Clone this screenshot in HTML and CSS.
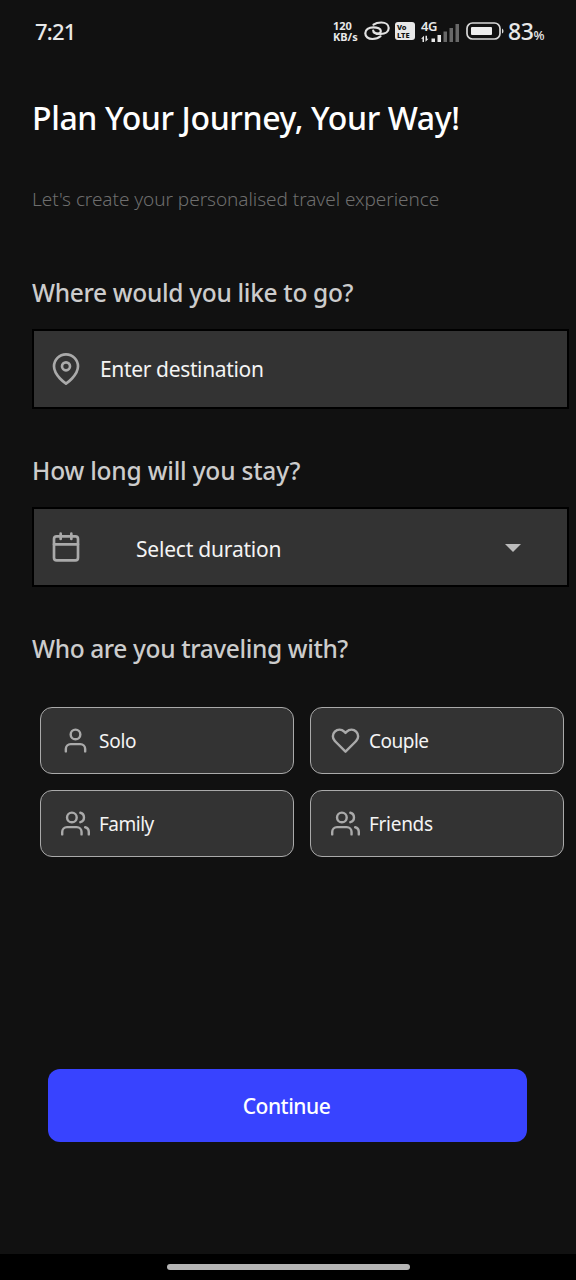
FILE: index.html
```html
<!DOCTYPE html>
<html lang="en">
<head>
<meta charset="utf-8">
<title>Plan Your Journey</title>
<link rel="stylesheet" href="styles.css">
</head>
<body>
<svg class="sprite" aria-hidden="true">
  <symbol id="users" viewBox="0 0 24 24"><path d="M17 21v-2a4 4 0 0 0-4-4H5a4 4 0 0 0-4 4v2"/><circle cx="9" cy="7" r="4"/><path d="M23 21v-2a4 4 0 0 0-3-3.87M16 3.13a4 4 0 0 1 0 7.75"/></symbol>
</svg>
<header class="status">
  <span class="clock">7:21</span>
  <div class="indicators">
    <div class="rate"><span>120</span><span class="unit">KB/s</span></div>
    <svg class="link" viewBox="0 0 26 20"><g fill="none" stroke="#e2e2e2" stroke-width="2.2" stroke-linecap="round"><path d="M16.500 15.300C14.500 17.200 11.500 18 8.500 18C4 18 1.300 15.500 1.300 12.300C1.300 8.700 4.800 6.300 9.300 6.300C13.500 6.300 16.800 7.800 16.800 10C16.800 11.800 15 12.800 12.500 12.800"/><path d="M9.500 3.700C11.500 2.200 14.500 1.500 17.300 1.500C21.700 1.500 24.700 3.800 24.700 7C24.700 10.700 21.200 13 16.700 13C12.500 13 9.200 11.600 9.200 9.500"/></g></svg>
    <div class="volte"><span>Vo</span><span>LTE</span></div>
    <div class="mobile">
      <svg class="bars" viewBox="0 0 38 19"><g fill="#686868"><path d="M22.500 8.500H26V19h-3.500zM28.500 5H32v14h-3.500zM34.500 1H38v18h-3.500z"/></g><g fill="#e8e8e8"><path d="M10.500 15.500H14V19h-3.500zM16.500 12H20v7h-3.500zM0 15.800l3-3V19H1.500v-3.200zM4.500 12.800H6v3h1.500l-3 3z"/></g></svg>
      <span class="gen">4G</span>
    </div>
    <svg class="battery" viewBox="0 0 38 18"><rect x="1" y="1" width="33" height="16" rx="5.500" fill="none" stroke="#d8d8d8" stroke-width="1.700"/><rect x="5" y="5" width="21" height="8" rx="1" fill="#eee"/><path d="M36 6.500q1.500.5 1.500 2.500T36 11.500z" fill="#d8d8d8"/></svg>
    <span class="charge">83<small>%</small></span>
  </div>
</header>
<main class="page">
  <h1 class="title">Plan Your Journey, Your Way!</h1>
  <p class="subtitle">Let's create your personalised travel experience</p>
  <h2 class="question where">Where would you like to go?</h2>
  <div class="field destination">
    <svg class="icon" viewBox="0 0 24 24"><path d="M21 10c0 7-9 13-9 13s-9-6-9-13a9 9 0 0 1 18 0z"/><circle cx="12" cy="10" r="3"/></svg>
    <span class="placeholder enter">Enter destination</span>
  </div>
  <h2 class="question stay">How long will you stay?</h2>
  <div class="field duration">
    <svg class="icon" viewBox="0 0 24 24"><rect x="3" y="4" width="18" height="18" rx="2"/><path d="M16 2v4M8 2v4M3 10h18"/></svg>
    <span class="placeholder select">Select duration</span>
    <svg class="caret" viewBox="0 0 16 8"><path d="M0 0h16L8 8z"/></svg>
  </div>
  <h2 class="question who">Who are you traveling with?</h2>
  <div class="options">
    <div class="option"><svg class="icon" viewBox="0 0 24 24"><path d="M20 21v-2a4 4 0 0 0-4-4H8a4 4 0 0 0-4 4v2"/><circle cx="12" cy="7" r="4"/></svg><span class="solo">Solo</span></div>
    <div class="option"><svg class="icon" viewBox="0 0 24 24"><path d="M20.840 4.610a5.500 5.500 0 0 0-7.780 0L12 5.670l-1.060-1.060a5.500 5.500 0 0 0-7.780 7.780l1.060 1.060L12 21.230l7.780-7.780 1.060-1.060a5.500 5.500 0 0 0 0-7.780z"/></svg><span class="couple">Couple</span></div>
    <div class="option"><svg class="icon"><use href="#users"/></svg><span class="family">Family</span></div>
    <div class="option"><svg class="icon"><use href="#users"/></svg><span class="friends">Friends</span></div>
  </div>
  <button class="continue">Continue</button>
</main>
<footer class="navbar"><div class="handle"></div></footer>
</body>
</html>
```
FILE: styles.css
```css
* { box-sizing: border-box; }
body {
  margin: 0;
  width: 576px;
  height: 1280px;
  display: flex;
  flex-direction: column;
  overflow: hidden;
  background: #111;
  color: #f4f4f4;
  font-family: "Noto Sans", "Open Sans", sans-serif;
  white-space: nowrap;
}
.sprite { position: absolute; width: 0; height: 0; }
.status {
  height: 62px;
  padding: 0 31px 0 35px;
  display: flex;
  align-items: center;
  justify-content: space-between;
}
.clock { font-size: 22px; font-weight: 500; color: #e8e8e8; letter-spacing: -0.8px; }
.indicators { display: flex; align-items: center; color: #e8e8e8; }
.rate {
  width: 28px;
  margin-right: 5px;
  padding-left: 2px;
  display: flex;
  flex-direction: column;
  font-size: 11px;
  line-height: 11px;
  font-weight: 700;
}
.link { width: 26px; height: 20px; margin-right: 5px; }
.volte {
  width: 20px;
  height: 18px;
  margin-right: 6px;
  padding: 1px 2px;
  border-radius: 3px;
  background: #e8e8e8;
  color: #111;
  display: flex;
  flex-direction: column;
  font-size: 7.5px;
  line-height: 8px;
  font-weight: 800;
}
.mobile { display: grid; width: 38px; height: 22px; margin-right: 7px; }
.mobile > * { grid-area: 1 / 1; }
.bars { width: 38px; height: 19px; align-self: end; }
.gen { font-size: 13px; line-height: 12px; font-weight: 600; letter-spacing: -0.5px; }
.battery { width: 38px; height: 18px; margin-right: 4px; }
.charge { width: 37px; margin-top: 3px; font-size: 23px; line-height: 28px; font-weight: 500; letter-spacing: -0.4px; }
.charge small { font-size: 13px; letter-spacing: 0; }

.page { height: 1192px; display: flex; flex-direction: column; padding: 32px 7px 0 32px; }
.title { margin: 0; font-size: 32px; line-height: 48px; font-weight: 500; color: #fff; letter-spacing: -0.38px; }
.subtitle { margin: 41px 0 0; font-size: 19px; line-height: 32px; font-weight: 300; color: #6e6e6e; letter-spacing: -0.05px; }
.question { margin: 0; font-size: 24.5px; line-height: 36px; font-weight: 500; color: #ccc; }
.where { margin-top: 60px; letter-spacing: -0.32px; }
.stay { margin-top: 44px; letter-spacing: -0.2px; }
.who { margin-top: 44px; letter-spacing: -0.38px; }
.field {
  flex: none;
  width: 537px;
  height: 80px;
  margin-top: 18px;
  border: 2px solid #000;
  background: #333;
  display: flex;
  align-items: center;
  padding-left: 16px;
}
.icon { fill: none; stroke: #aaa; stroke-width: 2; stroke-linecap: round; stroke-linejoin: round; }
.field .icon { width: 32px; height: 32px; }
.placeholder { font-size: 21px; line-height: 30px; color: #f4f4f4; }
.enter { margin-left: 18px; letter-spacing: -0.35px; }
.select { margin: 3px 0 0 54px; letter-spacing: -0.2px; }
.caret { width: 16px; height: 8px; margin: 2px 46px 0 auto; fill: #bbb; }
.options {
  display: grid;
  grid-template-columns: 254px 254px;
  grid-auto-rows: 67px;
  gap: 16px;
  margin: 40px 0 0 8px;
}
.option {
  display: flex;
  align-items: center;
  gap: 9px;
  padding-left: 20px;
  border: 1px solid #aaa;
  border-radius: 12px;
  background: #333;
  font-size: 19px;
  color: #f4f4f4;
}
.option .icon { width: 29px; height: 29px; }
.solo { letter-spacing: -0.25px; }
.couple, .family { letter-spacing: -0.5px; }
.friends { letter-spacing: -0.3px; }
.continue {
  width: 479px;
  height: 73px;
  margin: 212px 0 0 16px;
  padding: 0 2px 0 0;
  border: 0;
  border-radius: 12px;
  background: #3843ff;
  color: #fff;
  font: 500 21px "Noto Sans", "Open Sans", sans-serif;
  letter-spacing: -0.5px;
}
.navbar { height: 26px; background: #000; display: flex; justify-content: center; padding-top: 10px; }
.handle { width: 243px; height: 6px; border-radius: 3px; background: #b5b5b5; }
```
